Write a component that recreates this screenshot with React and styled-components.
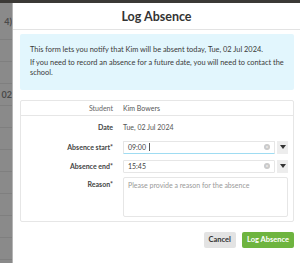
import React from "react";
import styled, { createGlobalStyle } from "styled-components";

const Global = createGlobalStyle`
  html, body {
    margin: 0;
    padding: 0;
    background: #8a8a8a;
    font-family: Lato, "Open Sans", sans-serif;
  }
`;

const Screen = styled.div`
  width: 300px;
  height: 263px;
  overflow: hidden;
  display: flex;
  flex-direction: column;
`;

const TopBar = styled.div`
  height: 3px;
  background: #3b3936;
  flex: none;
`;

const Body = styled.div`
  flex: 1;
  display: flex;
  min-height: 0;
`;

const Behind = styled.div`
  width: 12px;
  flex: none;
  background: #8a8a8a;
  border-right: 1px solid #b5b5b5;
  display: flex;
  flex-direction: column;
  overflow: hidden;
`;

const BehindRow = styled.div`
  height: ${(p) => p.h}px;
  flex: none;
  border-bottom: 1px solid #7f7f7f;
  color: #4a4a4a;
  font-size: 9px;
  font-weight: 700;
  display: flex;
  align-items: center;
  justify-content: flex-end;
  white-space: nowrap;
`;

const Modal = styled.div`
  flex: 1;
  background: #fff;
  display: flex;
  flex-direction: column;
  min-width: 0;
`;

const Header = styled.div`
  height: 26px;
  border-bottom: 1px solid #e3e3e3;
  display: flex;
  align-items: center;
  justify-content: center;
  font-size: 12.5px;
  font-weight: 700;
  color: #333;
  flex: none;
`;

const Content = styled.div`
  padding: 4px 6px 0 7px;
  display: flex;
  flex-direction: column;
`;

const Info = styled.div`
  background: #e2f6fd;
  border-radius: 2px;
  padding: 11px 4px 9px 10px;
  font-size: 7.4px;
  line-height: 10.5px;
  color: #3a3a3a;
  p {
    margin: 0 0 2px;
  }
`;

const Panel = styled.div`
  margin-top: 10px;
  border: 1px solid #e6e6e6;
  border-radius: 2px;
  padding-bottom: 4px;
`;

const Row = styled.div`
  display: grid;
  grid-template-columns: 92px 1fr;
  column-gap: 10px;
  align-items: ${(p) => (p.top ? "start" : "center")};
  min-height: ${(p) => p.h || 19}px;
  border-bottom: ${(p) => (p.divided ? "1px solid #e6e6e6" : "none")};
  padding-right: 5px;
`;

const Label = styled.div`
  text-align: right;
  font-size: 7px;
  font-weight: ${(p) => (p.plain ? 400 : 700)};
  color: ${(p) => (p.plain ? "#666" : "#444")};
  padding-top: ${(p) => (p.top ? "4px" : "0")};
`;

const Value = styled.div`
  font-size: 7px;
  color: #555;
`;

const FieldWrap = styled.div`
  display: flex;
  gap: 2px;
  align-items: stretch;
  height: 13px;
`;

const Input = styled.div`
  flex: 1;
  border: 1px solid #e6e6e6;
  border-bottom: 1px solid ${(p) => (p.focused ? "#9fdcf2" : "#e6e6e6")};
  border-radius: 1px;
  display: flex;
  align-items: center;
  padding: 0 4px;
  font-size: 7px;
  color: #444;
`;

const Caret = styled.span`
  display: inline-block;
  width: 1px;
  height: 8px;
  background: #555;
  margin-left: 3px;
`;

const Clear = styled.span`
  margin-left: auto;
  width: 6px;
  height: 6px;
  border-radius: 50%;
  background: #c9c9c9;
  display: flex;
  align-items: center;
  justify-content: center;
  color: #fff;
  font-size: 5px;
  line-height: 1;
`;

const Drop = styled.div`
  width: 11px;
  background: #ededed;
  display: flex;
  align-items: center;
  justify-content: center;
  svg {
    display: block;
  }
`;

const TextArea = styled.div`
  box-sizing: border-box;
  height: 40px;
  border: 1px solid #e6e6e6;
  border-radius: 2px;
  padding: 3px 4px;
  font-size: 7px;
  color: #999;
  margin-top: 1px;
`;

const Footer = styled.div`
  display: flex;
  justify-content: flex-end;
  gap: 6px;
  margin-top: 10px;
`;

const Button = styled.button`
  height: 16px;
  border: none;
  border-radius: 2px;
  padding: 0 5px;
  font-family: inherit;
  font-size: 7.5px;
  font-weight: 700;
  background: ${(p) => (p.primary ? "#6eb43f" : "#e3e3e3")};
  color: ${(p) => (p.primary ? "#fff" : "#333")};
`;

const Arrow = () => (
  <svg width="6" height="4" viewBox="0 0 6 4">
    <path d="M0 0h6L3 4z" fill="#333" />
  </svg>
);

const TimeField = ({ value, focused }) => (
  <FieldWrap>
    <Input focused={focused}>
      {value}
      {focused && <Caret />}
      <Clear>×</Clear>
    </Input>
    <Drop>
      <Arrow />
    </Drop>
  </FieldWrap>
);

const behind = [
  { h: 36, t: "4)" },
  { h: 21 },
  { h: 21 },
  { h: 21, t: "02" },
  { h: 21 },
  { h: 21 },
  { h: 21 },
  { h: 21 },
  { h: 21 },
  { h: 21 },
  { h: 21 },
];

export default function App() {
  return (
    <Screen>
      <Global />
      <TopBar />
      <Body>
        <Behind>
          {behind.map((r, i) => (
            <BehindRow key={i} h={r.h}>
              {r.t}
            </BehindRow>
          ))}
        </Behind>
        <Modal>
          <Header>Log Absence</Header>
          <Content>
            <Info>
              <p>This form lets you notify that Kim will be absent today, Tue, 02 Jul 2024.</p>
              <p>If you need to record an absence for a future date, you will need to contact the school.</p>
            </Info>
            <Panel>
              <Row divided h={14}>
                <Label plain>Student</Label>
                <Value>Kim Bowers</Value>
              </Row>
              <Row h={22}>
                <Label>Date</Label>
                <Value>Tue, 02 Jul 2024</Value>
              </Row>
              <Row>
                <Label>Absence start*</Label>
                <TimeField value="09:00" focused />
              </Row>
              <Row>
                <Label>Absence end*</Label>
                <TimeField value="15:45" />
              </Row>
              <Row top>
                <Label top>Reason*</Label>
                <TextArea>Please provide a reason for the absence</TextArea>
              </Row>
            </Panel>
            <Footer>
              <Button>Cancel</Button>
              <Button primary>Log Absence</Button>
            </Footer>
          </Content>
        </Modal>
      </Body>
    </Screen>
  );
}
